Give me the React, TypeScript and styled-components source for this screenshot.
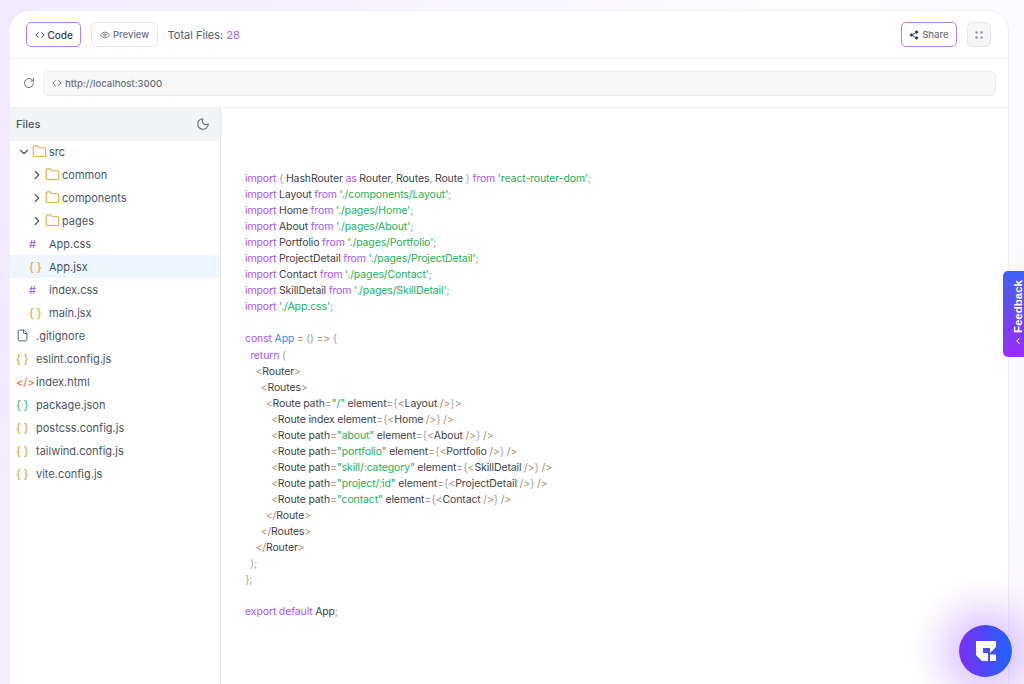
import React from 'react';
import styled, { createGlobalStyle } from 'styled-components';
import { ChevronDown, ChevronRight, ChevronLeft, Code, Eye, File, Folder, Moon, RotateCw, Share2 } from 'lucide-react';

const Global = createGlobalStyle`
  html, body { margin: 0; padding: 0; height: 100%; }
  body { font-family: Inter, "Liberation Sans", sans-serif; overflow: hidden; }
  #root { height: 100%; }
`;

const Page = styled.div`
  box-sizing: border-box;
  width: 1024px;
  height: 684px;
  padding: 11px 16px 0 10px;
  background: linear-gradient(100deg, #f1e9fd 0%, #f8f5fe 35%, #fdfcff 70%, #fbf9fe 100%);
  overflow: hidden;
`;

const Card = styled.main`
  box-sizing: border-box;
  height: 673px;
  display: flex;
  flex-direction: column;
  background: #fff;
  border-radius: 20px 20px 0 0;
  box-shadow: 0 0 0 1px #f0eff4;
  overflow: hidden;
`;

const Toolbar = styled.header`
  flex: 0 0 48px;
  box-sizing: border-box;
  display: flex;
  align-items: center;
  padding: 0 17px 0 16px;
  border-bottom: 1px solid #f0f0f3;
  gap: 10px;
`;

const Button = styled.button<{ $active?: boolean; $muted?: boolean }>`
  box-sizing: border-box;
  height: 25px;
  padding: 0 7.5px;
  display: inline-flex;
  align-items: center;
  gap: 3px;
  font: 500 ${p => (p.$muted ? 9.5 : 10)}px Inter, sans-serif;
  border-radius: 5px;
  background: #fff;
  color: ${p => (p.$muted ? '#6b7280' : '#374151')};
  border: 1px solid ${p => (p.$active ? '#b57bf8' : '#e8e8ec')};
`;

const Total = styled.span`
  font-size: 11px;
  color: #555d6b;
`;

const Count = styled.span`
  color: #a45ff5;
`;

const Spacer = styled.div`
  flex: 1;
`;

const SquareButton = styled.button`
  box-sizing: border-box;
  width: 24px;
  height: 25px;
  padding: 0;
  display: flex;
  align-items: center;
  justify-content: center;
  background: #f6f6f7;
  border: 1px solid #e8e8ec;
  border-radius: 5px;
`;

const UrlRow = styled.div`
  flex: 0 0 49px;
  box-sizing: border-box;
  display: flex;
  align-items: center;
  gap: 8px;
  padding: 0 12px 0 13px;
  border-bottom: 1px solid #f0f0f3;
  color: #6b7280;
`;

const UrlField = styled.div`
  flex: 1;
  box-sizing: border-box;
  height: 25px;
  display: flex;
  align-items: center;
  gap: 3px;
  padding: 0 8px;
  background: #f8f8f9;
  border: 1px solid #ececef;
  border-radius: 5px;
  font-size: 9.6px;
  font-weight: 500;
  color: #6b7280;
`;

const Body = styled.div`
  flex: 1;
  display: flex;
  min-height: 0;
`;

const Sidebar = styled.aside`
  flex: 0 0 211px;
  box-sizing: border-box;
  border-right: 1px solid #e5e7eb;
`;

const SidebarHead = styled.div`
  height: 33px;
  margin-bottom: -1px;
  padding: 0 10px 1px 6px;
  box-sizing: border-box;
  display: flex;
  align-items: center;
  justify-content: space-between;
  background: #f3f4f6;
  font-size: 11px;
  font-weight: 500;
  color: #4b5563;
`;

const Row = styled.div<{ $selected?: boolean; $level: number }>`
  height: 23px;
  display: flex;
  align-items: center;
  padding-left: ${p => p.$level}px;
  background: ${p => (p.$selected ? '#eff6ff' : 'transparent')};
  font-size: 11px;
  color: #4b5563;
`;

const Slot = styled.span<{ $w: number; $color?: string }>`
  flex: 0 0 ${p => p.$w}px;
  display: flex;
  align-items: center;
  color: ${p => p.$color || 'inherit'};
`;

const Glyph = styled.span<{ $color: string }>`
  flex: 0 0 20px;
  font-size: 11px;
  font-weight: 500;
  white-space: pre;
  color: ${p => p.$color};
`;

const Editor = styled.section`
  flex: 1;
  box-sizing: border-box;
  padding: 63px 24px 0;
`;

const Pre = styled.pre`
  margin: 0;
  font-family: Inter, sans-serif;
  font-size: 10.5px;
  line-height: 16.05px;
  letter-spacing: -0.11px;
  word-spacing: -0.25px;
  font-variant-ligatures: none;
  font-feature-settings: "calt" 0;
  color: #3f3f46;
`;

const Tok = styled.span<{ $t: 'k' | 's' | 'p' | 'g' | 'b' }>`
  color: ${p => ({ k: '#a855f7', s: '#22b05c', p: '#b58a5e', g: '#9ca3af', b: '#3b82f6' }[p.$t])};
`;

const FeedbackTab = styled.button`
  position: fixed;
  right: -8px;
  top: 271px;
  width: 29px;
  height: 86px;
  padding: 0 0 11px;
  border: 0;
  border-radius: 5px;
  background: linear-gradient(180deg, #3f62f5 0%, #9b2cf6 100%);
  color: #fff;
  display: flex;
  flex-direction: column-reverse;
  align-items: center;
  justify-content: flex-start;
  gap: 3px;
`;

const FeedbackLabel = styled.span`
  writing-mode: vertical-rl;
  transform: rotate(180deg);
  font-size: 11.5px;
  font-weight: 600;
`;

const Fab = styled.button`
  position: fixed;
  left: 959px;
  top: 625px;
  width: 53px;
  height: 52px;
  padding: 0;
  border: 0;
  border-radius: 50%;
  background: linear-gradient(90deg, #7c2ff5 0%, #1f63fb 100%);
  box-shadow: 0 0 36px 20px rgba(150, 80, 245, 0.3);
  display: flex;
  align-items: center;
  justify-content: center;
`;

const CurlyYellow = '#e0a83e';

type Item =
  | { kind: 'open' | 'closed'; name: string; level: number }
  | { kind: 'file'; name: string; level: number; glyph: string; color: string; selected?: boolean }
  | { kind: 'plain'; name: string; level: number };

const tree: Item[] = [
  { kind: 'open', name: 'src', level: 7 },
  { kind: 'closed', name: 'common', level: 20 },
  { kind: 'closed', name: 'components', level: 20 },
  { kind: 'closed', name: 'pages', level: 20 },
  { kind: 'file', name: 'App.css', level: 19, glyph: '#', color: '#a560f2' },
  { kind: 'file', name: 'App.jsx', level: 19, glyph: '{ }', color: CurlyYellow, selected: true },
  { kind: 'file', name: 'index.css', level: 19, glyph: '#', color: '#a560f2' },
  { kind: 'file', name: 'main.jsx', level: 19, glyph: '{ }', color: CurlyYellow },
  { kind: 'plain', name: '.gitignore', level: 6 },
  { kind: 'file', name: 'eslint.config.js', level: 6, glyph: '{ }', color: CurlyYellow },
  { kind: 'file', name: 'index.html', level: 6, glyph: '</>', color: '#ef7a4f' },
  { kind: 'file', name: 'package.json', level: 6, glyph: '{ }', color: '#3fbf74' },
  { kind: 'file', name: 'postcss.config.js', level: 6, glyph: '{ }', color: CurlyYellow },
  { kind: 'file', name: 'tailwind.config.js', level: 6, glyph: '{ }', color: CurlyYellow },
  { kind: 'file', name: 'vite.config.js', level: 6, glyph: '{ }', color: CurlyYellow },
];

const TreeRow = ({ item }: { item: Item }) => {
  if (item.kind === 'open' || item.kind === 'closed') {
    const Chevron = item.kind === 'open' ? ChevronDown : ChevronRight;
    return (
      <Row $level={item.level}>
        <Slot $w={15}><Chevron size={14} strokeWidth={2} /></Slot>
        <Slot $w={17} $color="#e3ad4f"><Folder size={15} strokeWidth={1.9} /></Slot>
        {item.name}
      </Row>
    );
  }
  if (item.kind === 'plain') {
    return (
      <Row $level={item.level}>
        <Slot $w={20}><File size={13} strokeWidth={1.7} /></Slot>
        {item.name}
      </Row>
    );
  }
  return (
    <Row $level={item.level} $selected={item.selected}>
      <Glyph $color={item.color}>{item.glyph}</Glyph>
      {item.name}
    </Row>
  );
};

const K = ({ c }: { c: string }) => <Tok $t="k">{c}</Tok>;
const S = ({ c }: { c: string }) => <Tok $t="s">{c}</Tok>;
const P = ({ c }: { c: string }) => <Tok $t="p">{c}</Tok>;
const G = ({ c }: { c: string }) => <Tok $t="g">{c}</Tok>;
const B = ({ c }: { c: string }) => <Tok $t="b">{c}</Tok>;

const Imp = ({ name, path }: { name: string; path: string }) => (
  <>
    <K c="import" /> {name} <K c="from" /> <S c={`'${path}'`} /><G c=";" />{'\n'}
  </>
);

const RouteLine = ({ attr, value, comp }: { attr: string; value: string; comp: string }) => (
  <>
    {'          '}<P c="<" />Route {attr}<P c="=" /><S c={`"${value}"`} /> element<P c="=" /><G c="{" /><P c="<" />{comp} <P c="/>" /><G c="}" /> <P c="/>" />{'\n'}
  </>
);

const CodeView = () => (
  <Pre>
    <K c="import" /> <G c="{" /> HashRouter <K c="as" /> Router<G c="," /> Routes<G c="," /> Route <G c="}" /> <K c="from" /> <S c="'react-router-dom'" /><G c=";" />{'\n'}
    <Imp name="Layout" path="./components/Layout" />
    <Imp name="Home" path="./pages/Home" />
    <Imp name="About" path="./pages/About" />
    <Imp name="Portfolio" path="./pages/Portfolio" />
    <Imp name="ProjectDetail" path="./pages/ProjectDetail" />
    <Imp name="Contact" path="./pages/Contact" />
    <Imp name="SkillDetail" path="./pages/SkillDetail" />
    <K c="import" /> <S c="'./App.css'" /><G c=";" />{'\n\n'}
    <K c="const" /> <B c="App" /> <P c="=" /> <G c="()" /> <P c="=>" /> <G c="{" />{'\n'}
    {'  '}<K c="return" /> <G c="(" />{'\n'}
    {'    '}<P c="<" />Router<P c=">" />{'\n'}
    {'      '}<P c="<" />Routes<P c=">" />{'\n'}
    {'        '}<P c="<" />Route path<P c="=" /><S c={'"/"'} /> element<P c="=" /><G c="{" /><P c="<" />Layout <P c="/>" /><G c="}" /><P c=">" />{'\n'}
    {'          '}<P c="<" />Route index element<P c="=" /><G c="{" /><P c="<" />Home <P c="/>" /><G c="}" /> <P c="/>" />{'\n'}
    <RouteLine attr="path" value="about" comp="About" />
    <RouteLine attr="path" value="portfolio" comp="Portfolio" />
    <RouteLine attr="path" value="skill/:category" comp="SkillDetail" />
    <RouteLine attr="path" value="project/:id" comp="ProjectDetail" />
    <RouteLine attr="path" value="contact" comp="Contact" />
    {'        '}<P c="</" />Route<P c=">" />{'\n'}
    {'      '}<P c="</" />Routes<P c=">" />{'\n'}
    {'    '}<P c="</" />Router<P c=">" />{'\n'}
    {'  '}<G c=");" />{'\n'}
    <G c="};" />{'\n\n'}
    <K c="export default" /> App<G c=";" />
  </Pre>
);

const CornersIcon = () => (
  <svg width="8" height="8" viewBox="0 0 8 8" fill="#7b8088" aria-hidden>
    <rect x="0.5" y="0.5" width="2" height="2" />
    <rect x="5.5" y="0.5" width="2" height="2" />
    <rect x="0.5" y="5.5" width="2" height="2" />
    <rect x="5.5" y="5.5" width="2" height="2" />
  </svg>
);

const Logo = () => (
  <svg width="20" height="20" viewBox="0 0 20 20" aria-hidden>
    <path fill="#fff" d="M0 0H20V6L14 12V7H7V12H12V20H6L0 14Z" />
    <rect x="14" y="13.5" width="6" height="6.5" fill="#fff" />
  </svg>
);

export default function App() {
  return (
    <Page>
      <Global />
      <Card>
        <Toolbar>
          <Button $active><Code size={10} strokeWidth={2.4} />Code</Button>
          <Button $muted><Eye size={10} />Preview</Button>
          <Total>Total Files: <Count>28</Count></Total>
          <Spacer />
          <Button $active $muted><Share2 size={10} color="#374151" fill="#374151" />Share</Button>
          <SquareButton><CornersIcon /></SquareButton>
        </Toolbar>
        <UrlRow>
          <RotateCw size={12} />
          <UrlField><Code size={10} strokeWidth={2.4} />http://localhost:3000</UrlField>
        </UrlRow>
        <Body>
          <Sidebar>
            <SidebarHead>
              Files
              <Moon size={14} color="#6b7280" />
            </SidebarHead>
            {tree.map(item => <TreeRow key={item.name} item={item} />)}
          </Sidebar>
          <Editor><CodeView /></Editor>
        </Body>
      </Card>
      <FeedbackTab>
        <ChevronLeft size={10} strokeWidth={2.5} />
        <FeedbackLabel>Feedback</FeedbackLabel>
      </FeedbackTab>
      <Fab><Logo /></Fab>
    </Page>
  );
}
